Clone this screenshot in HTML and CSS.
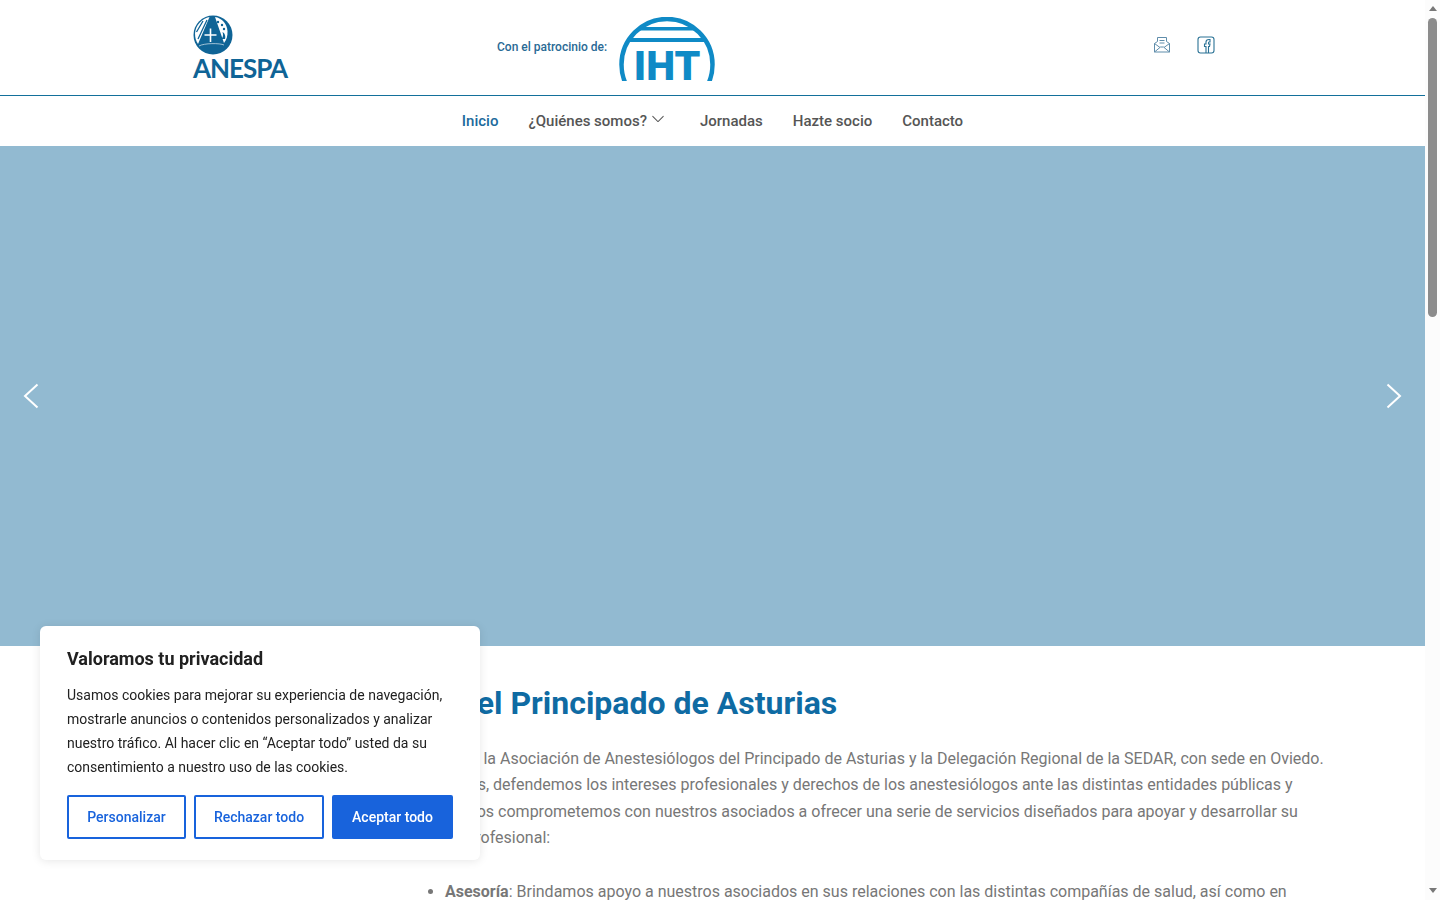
FILE: index.html
```html
<!DOCTYPE html>
<html lang="es">
<head>
    <meta charset="UTF-8">
    <meta name="viewport" content="width=device-width, initial-scale=1.0">
    <title>ANESPA</title>
    <link rel="stylesheet" href="styles.css">
</head>
<body>
    <div class="page">
        <header class="top-bar">
            <a class="brand" href="#">
                <svg class="brand-mark" width="40" height="40" viewBox="0 0 40 40">
                    <circle cx="20" cy="20" r="19.5" fill="#0f6496"/>
                    <path d="M16.500 2C9 3.500 2.500 10 2 18.500C2 23 3 26 5 29L16.500 2Z" fill="#fff"/>
                    <path d="M22 2C29 3 34 9 34.500 16C34.800 21 33.500 25 31 28L22 2Z" fill="#fff"/>
                    <path d="M14 5L5 24M10 6L3.500 17" stroke="#0f6496" stroke-width="1.300"/>
                    <path d="M32 24C33 21 31.500 18 29.500 17C30.500 20 30 22 28.500 24Z" fill="#0f6496"/>
                    <circle cx="25" cy="7" r="1.200" fill="#0f6496"/>
                    <circle cx="29" cy="10" r="1.200" fill="#0f6496"/>
                    <circle cx="31" cy="14" r="1.200" fill="#0f6496"/>
                    <path d="M17.500 13.500V27M11.500 20H23.500" stroke="#fff" stroke-width="1.600"/>
                    <path d="M6 31C11 28 27 28 31 30" stroke="#fff" stroke-width="0.600" fill="none"/>
                </svg>
                <span class="brand-name">ANESPA</span>
            </a>
            <div class="sponsor">
                <span class="sponsor-label">Con el patrocinio de:</span>
                <div class="iht-logo">
                    <svg width="96" height="64" viewBox="0 0 96 64" fill="#0f8ac6">
                        <circle cx="48" cy="47.500" r="45.500" fill="none" stroke="#0f8ac6" stroke-width="4.500"/>
                        <rect x="21" y="10" width="54" height="3.500"/>
                        <rect x="10" y="21" width="76" height="4"/>
                    </svg>
                    <span class="iht-text">IHT</span>
                </div>
            </div>
            <div class="social">
                <a href="#" aria-label="Correo">
                    <svg width="18" height="18" viewBox="0 0 18 18" fill="none" stroke="#5f8dab" stroke-width="1">
                        <path d="M1.500 7.500L4.500 5.500V1.500H13.500V5.500L16.500 7.500V16H1.500Z"/>
                        <path d="M1.500 7.500L7 11.500M16.500 7.500L11 11.500M1.500 16L7.500 11H10.500L16.500 16M6.500 4.500H11.500M6.500 7H11.500"/>
                    </svg>
                </a>
                <a href="#" aria-label="Facebook">
                    <svg width="18" height="18" viewBox="0 0 18 18" fill="none" stroke="#2a7295" stroke-width="1.100">
                        <rect x="1" y="1" width="16" height="16" rx="2.500"/>
                        <path d="M9 17V10.500H7.500V8H9V6C9 4.500 10 3.500 12 3.500H13V6H12C11.500 6 11.500 6.500 11.500 7V8H13L12.500 10.500H11.500V17"/>
                    </svg>
                </a>
            </div>
        </header>

        <nav class="main-nav">
            <a class="active" href="#">Inicio</a>
            <a class="has-sub" href="#">¿Quiénes somos?
                <svg width="14" height="14" viewBox="0 0 16 16" fill="#555"><path d="M1.600 4.600a.5.5 0 0 1 .8 0L8 10.300l5.600-5.700a.5.5 0 0 1 .8.700l-6 6a.5.5 0 0 1-.8 0l-6-6a.5.5 0 0 1 0-.7z"/></svg>
            </a>
            <a href="#">Jornadas</a>
            <a href="#">Hazte socio</a>
            <a href="#">Contacto</a>
        </nav>

        <section class="hero">
            <svg width="16" height="26" viewBox="0 0 16 26" fill="none" stroke="#fff" stroke-width="2"><path d="M14.500 1.500L2 13L14.500 24.500"/></svg>
            <svg width="16" height="26" viewBox="0 0 16 26" fill="none" stroke="#fff" stroke-width="2"><path d="M1.500 1.500L14 13L1.500 24.500"/></svg>
        </section>

        <main class="content">
            <h1>Anestesia del Principado de Asturias</h1>
            <div class="content-body">
                <p>Anespa es la Asociación de Anestesiólogos del Principado de Asturias y la Delegación Regional de la SEDAR, con sede en Oviedo.<br>
                En Asturias, defendemos los intereses profesionales y derechos de los anestesiólogos ante las distintas entidades públicas y<br>
                Además nos comprometemos con nuestros asociados a ofrecer una serie de servicios diseñados para apoyar y desarrollar su<br>
                práctica profesional:</p>
                <ul>
                    <li><strong>Asesoría</strong>: Brindamos apoyo a nuestros asociados en sus relaciones con las distintas compañías de salud, así como en</li>
                </ul>
            </div>
        </main>
    </div>

    <div class="scrollbar">
        <span class="arrow-up"></span>
        <span class="thumb"></span>
        <span class="arrow-down"></span>
    </div>

    <div class="cookie-box">
        <h2>Valoramos tu privacidad</h2>
        <p>Usamos cookies para mejorar su experiencia de navegación, mostrarle anuncios o contenidos personalizados y analizar nuestro tráfico. Al hacer clic en “Aceptar todo” usted da su consentimiento a nuestro uso de las cookies.</p>
        <div class="cookie-buttons">
            <button class="btn-outline btn-custom">Personalizar</button>
            <button class="btn-outline btn-reject">Rechazar todo</button>
            <button class="btn-solid">Aceptar todo</button>
        </div>
    </div>
</body>
</html>
```

FILE: styles.css
```css
* {
    box-sizing: border-box;
}
html, body {
    height: 900px;
    overflow: hidden;
}
body {
    margin: 0;
    display: flex;
    background-color: #fff;
    font-family: Roboto, Arial, sans-serif;
    font-size: 16px;
    color: #777;
}
a {
    text-decoration: none;
}
.page {
    width: 1425px;
    flex-shrink: 0;
}

/* header */
.top-bar {
    height: 96px;
    border-bottom: 1px solid #13709b;
    padding-left: 193px;
    display: flex;
}
.brand {
    width: 96px;
    padding-top: 15px;
    display: flex;
    flex-direction: column;
}
.brand-mark {
    display: block;
}
.brand-name {
    font-family: Lato, Arial, sans-serif;
    font-weight: 700;
    font-size: 26px;
    line-height: 27px;
    letter-spacing: -1px;
    color: #0f6496;
}
.sponsor {
    margin-left: 208px;
    display: flex;
    align-items: flex-start;
    gap: 12px;
}
.sponsor-label {
    margin-top: 39px;
    font-size: 12px;
    line-height: 16px;
    font-weight: 500;
    color: #2a6a95;
}
.iht-logo {
    position: relative;
    width: 96px;
    height: 64px;
    margin-top: 17px;
}
.iht-logo svg {
    display: block;
}
.iht-text {
    position: absolute;
    left: 0;
    right: 0;
    top: 25px;
    text-align: center;
    font-weight: 900;
    font-size: 41px;
    line-height: 48px;
    color: #0f8ac6;
}
.social {
    margin-left: auto;
    margin-right: 210px;
    padding-top: 36px;
    display: flex;
    gap: 26px;
}
.social svg {
    display: block;
}

/* nav */
.main-nav {
    height: 50px;
    display: flex;
    justify-content: center;
    align-items: center;
    gap: 30px;
    font-size: 15px;
    font-weight: 500;
}
.main-nav a {
    color: #555;
}
.main-nav a.active {
    color: #1c6a9c;
}
.has-sub {
    display: flex;
    align-items: center;
    gap: 4px;
    margin-right: 5px;
}
.has-sub svg {
    margin-bottom: 4px;
}

/* slider */
.hero {
    height: 500px;
    background-color: #92bad1;
    padding: 0 23px;
    display: flex;
    justify-content: space-between;
    align-items: center;
}

/* content */
.content {
    padding-left: 308px;
}
.content h1 {
    margin: 38px 0 0;
    font-size: 32px;
    line-height: 38px;
    font-weight: 700;
    color: #0f6ba3;
    white-space: nowrap;
}
.content-body {
    margin-left: 97px;
    line-height: 26.4px;
}
.content-body p {
    margin: 24px 0 0;
    white-space: nowrap;
}
.content-body ul {
    margin: 27px 0 0;
    padding-left: 40px;
    white-space: nowrap;
}

/* fake scrollbar */
.scrollbar {
    width: 15px;
    height: 900px;
    padding: 6px 0;
    flex-shrink: 0;
    background-color: #fcfcfc;
    display: flex;
    flex-direction: column;
    align-items: center;
}
.arrow-up {
    border: 4px solid transparent;
    border-top: 0;
    border-bottom: 5px solid #777;
}
.thumb {
    width: 9px;
    height: 299px;
    margin-top: 7px;
    border-radius: 5px;
    background-color: #8c8c8c;
}
.arrow-down {
    margin-top: auto;
    margin-bottom: 1px;
    border: 4px solid transparent;
    border-bottom: 0;
    border-top: 5px solid #777;
}

/* cookie banner */
.cookie-box {
    position: fixed;
    left: 40px;
    top: 626px;
    width: 440px;
    height: 234px;
    padding: 22px 27px;
    background-color: #fff;
    border-radius: 6px;
    box-shadow: 0 1px 10px rgba(0,0,0,0.1);
    color: #212121;
}
.cookie-box h2 {
    margin: 0;
    font-size: 18px;
    line-height: 21px;
    font-weight: 700;
}
.cookie-box p {
    margin: 14px 0 0;
    font-size: 14px;
    line-height: 24px;
}
.cookie-buttons {
    margin-top: 16px;
    display: flex;
    gap: 8px;
}
.cookie-buttons button {
    height: 44px;
    border: 2px solid #1863dc;
    border-radius: 2px;
    font-family: Roboto, Arial, sans-serif;
    font-size: 14px;
    font-weight: 500;
    cursor: pointer;
}
.btn-outline {
    background-color: #fff;
    color: #1863dc;
}
.btn-custom {
    width: 119px;
}
.btn-reject {
    width: 130px;
}
.btn-solid {
    width: 121px;
    background-color: #1863dc;
    color: #fff;
}
```
